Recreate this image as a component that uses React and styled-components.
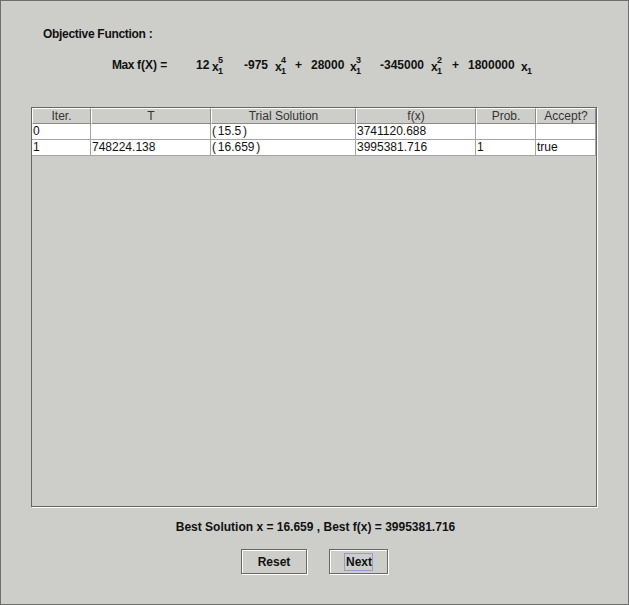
import React from 'react';
import styled, { createGlobalStyle } from 'styled-components';

const GlobalStyle = createGlobalStyle`
  body {
    margin: 0;
    background: #cdceca;
    font-family: "Liberation Sans", Arial, sans-serif;
  }
`;

const Frame = styled.div`
  box-sizing: border-box;
  width: 629px;
  height: 605px;
  border: 1px solid #6e6e6e;
  background: #cdceca;
  color: #111;
  display: flex;
  flex-direction: column;
`;

const Title = styled.div`
  margin: 26px 0 0 42px;
  font-size: 12px;
  font-weight: bold;
  line-height: 14px;
  letter-spacing: -0.3px;
`;

const Equation = styled.div`
  display: flex;
  align-items: center;
  height: 22px;
  margin: 13px 0 0 111px;
  font-size: 12px;
  font-weight: bold;
  line-height: 14px;
  white-space: nowrap;
`;

const Tok = styled.span`
  flex: 0 0 ${props => props.w}px;
  min-width: 0;
  letter-spacing: ${props => (props.tight ? '-0.5px' : '0')};
`;

const VarBox = styled.span`
  flex: 0 0 ${props => props.w}px;
  min-width: 0;
  display: flex;
  align-items: center;
`;

const XChar = styled.span`
  width: 6px;
  margin-top: 3px;
`;

const Idx = styled.span`
  display: flex;
  flex-direction: column;
  justify-content: space-between;
  height: 19px;
  font-size: 9px;
  line-height: 8px;
`;

const Pane = styled.div`
  box-sizing: border-box;
  width: 566px;
  height: 400px;
  margin: 31px 0 0 30px;
  border: 1px solid #666;
  box-shadow: 1px 1px 0 #fff;
  background: #cdceca;
`;

const Grid = styled.div`
  display: grid;
  grid-template-columns: 59px 120px 145px 120px 60px 60px;
  font-size: 12px;
  line-height: 14px;
`;

const HeadCell = styled.div`
  box-sizing: border-box;
  height: 16px;
  border-top: 1px solid #fff;
  border-left: 1px solid #fff;
  border-right: 1px solid #8a8a8a;
  border-bottom: 1px solid #8a8a8a;
  background: #cdceca;
  color: #333;
  text-align: center;
`;

const Cell = styled.div`
  box-sizing: border-box;
  height: 16px;
  padding-left: 1px;
  border-right: 1px solid #a4a4a4;
  border-bottom: 1px solid #a4a4a4;
  background: #fff;
  color: #111;
  white-space: pre;
  word-spacing: ${props => (props.paren ? '-1.5px' : '0')};
`;

const Best = styled.div`
  margin-top: 13px;
  padding-left: 2px;
  text-align: center;
  font-size: 12px;
  font-weight: bold;
  line-height: 14px;
`;

const Buttons = styled.div`
  display: flex;
  justify-content: center;
  gap: 22px;
  margin: 15px 0 0 0;
`;

const Button = styled.button`
  box-sizing: border-box;
  width: ${props => props.w}px;
  height: 25px;
  padding: 0;
  border: 1px solid #6a6a6a;
  box-shadow: 1px 1px 0 #fff, inset 1px 1px 0 #fff;
  background: #cdceca;
  font-family: "Liberation Sans", Arial, sans-serif;
  font-size: 12px;
  font-weight: bold;
  color: #111;
  display: flex;
  align-items: center;
  justify-content: center;
`;

const Focus = styled.span`
  padding: 1px 0 1px 1px;
  outline: 1px solid #9a9ad2;
`;

const columns = ['Iter.', 'T', 'Trial Solution', 'f(x)', 'Prob.', 'Accept?'];

const rows = [
  ['0', '', '( 15.5 )', '3741120.688', '', ''],
  ['1', '748224.138', '( 16.659 )', '3995381.716', '1', 'true'],
];

function Var ({ w, sup }) {
  return (
    <VarBox w={w}>
      <XChar>x</XChar>
      <Idx>
        <span>{sup || '\u00a0'}</span>
        <span>1</span>
      </Idx>
    </VarBox>
  );
}

export default function App () {
  return (
    <>
      <GlobalStyle />
      <Frame>
        <Title>Objective Function :</Title>
        <Equation>
          <Tok w={25} tight>Max</Tok>
          <Tok w={59}>f(X) =</Tok>
          <Tok w={16}>12</Tok>
          <Var w={32} sup='5' />
          <Tok w={31}>-975</Tok>
          <Var w={20} sup='4' />
          <Tok w={16}>+</Tok>
          <Tok w={39}>28000</Tok>
          <Var w={30} sup='3' />
          <Tok w={51}>-345000</Tok>
          <Var w={21} sup='2' />
          <Tok w={16}>+</Tok>
          <Tok w={53}>1800000</Tok>
          <Var w={14} />
        </Equation>
        <Pane>
          <Grid>
            {columns.map(c => <HeadCell key={c}>{c}</HeadCell>)}
            {rows.map((r, i) => r.map((v, j) => (
              <Cell key={i + '-' + j} paren={j === 2}>{v}</Cell>
            )))}
          </Grid>
        </Pane>
        <Best>Best Solution x = 16.659 , Best f(x) = 3995381.716</Best>
        <Buttons>
          <Button w={66}>Reset</Button>
          <Button w={59}><Focus>Next</Focus></Button>
        </Buttons>
      </Frame>
    </>
  );
}
